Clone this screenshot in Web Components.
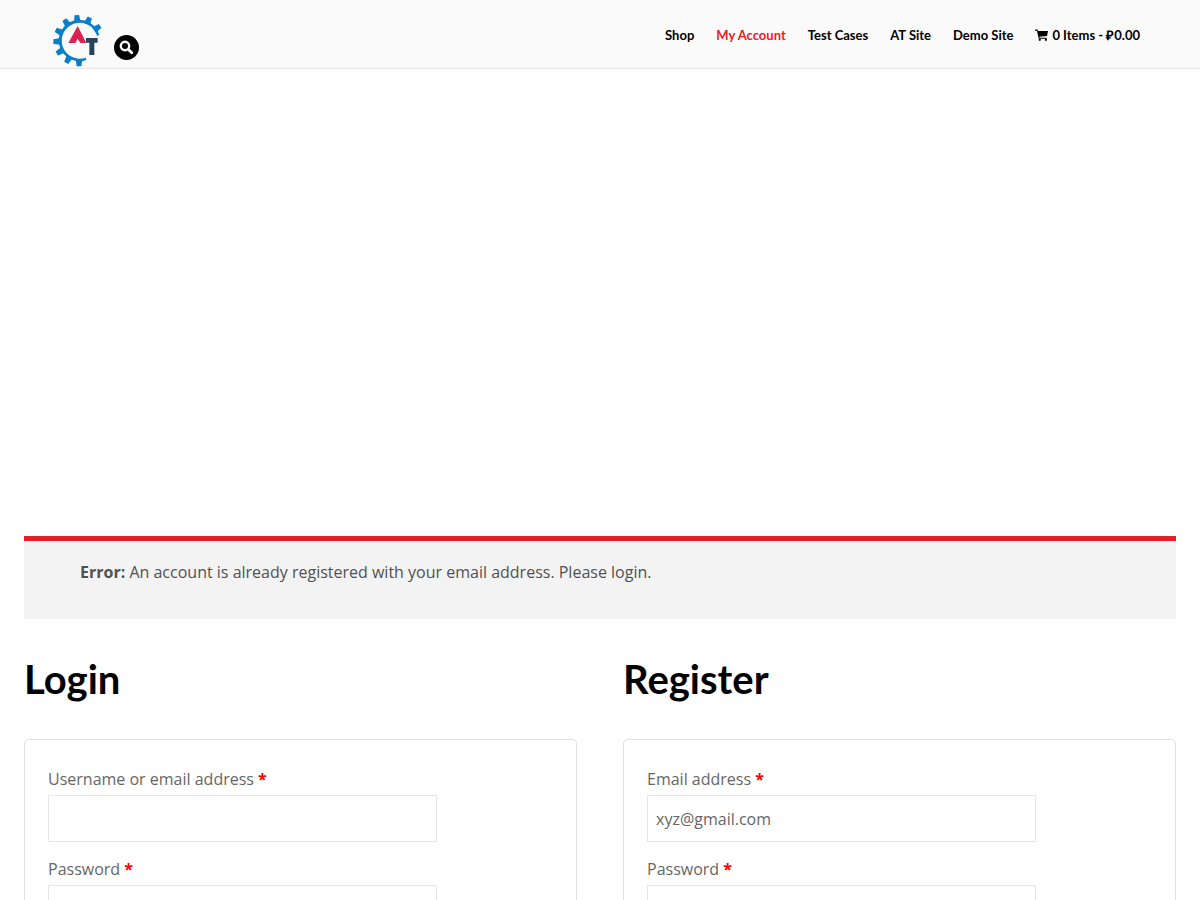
<!DOCTYPE html>
<html lang="en">
<head>
<meta charset="utf-8">
<meta name="viewport" content="width=device-width, initial-scale=1">
<title>My Account</title>
<style>
body { margin: 0; background: #fff; color: #666; font: 16px/24px "Open Sans", sans-serif; }
</style>
</head>
<body>
<account-page></account-page>
<script>
const define = (name, html, setup) => {
  const template = document.createElement('template');
  template.innerHTML = html;
  customElements.define(name, class extends HTMLElement {
    constructor() {
      super();
      this.attachShadow({ mode: 'open' }).append(template.content.cloneNode(true));
    }
    connectedCallback() { if (setup) setup(this, this.shadowRoot); }
  });
};

define('site-logo', `
<style>
:host { display: block; }
a, svg { display: block; }
</style>
<a href="#" aria-label="Home">
<svg width="52" height="54" viewBox="0 0 156 162">
  <g transform="translate(81 80)">
    <path d="M22 58A62 62 0 1 1 61 -17L54 -15A54 54 0 1 0 20 51Z" fill="#0a7fc8"/>
    <g id="teeth" fill="#0a7fc8"></g>
  </g>
  <path d="M77 36L103 87H85L77 74L70 87H49Z" fill="#dd2150"/>
  <path d="M102 72h35v14h-10v37h-15v-37h-10z" fill="#27445c"/>
</svg></a>`, (host, root) => {
  root.querySelector('#teeth').innerHTML = [90, 120, 150, 178, 205, 235, 265, 295, 325]
    .map(a => `<path d="M55 -10L77 -7V7L55 10Z" transform="rotate(${a})"/>`).join('');
});

define('search-button', `
<style>
:host { display: block; }
button { display: block; width: 25px; height: 25px; padding: 0; border: 0; border-radius: 50%; background: #000; }
svg { display: block; margin: auto; }
</style>
<button type="button" aria-label="Search"><svg width="15" height="15" viewBox="0 0 15 15" fill="none" stroke="#fff"><circle cx="6" cy="6" r="4.2" stroke-width="2.4"/><path d="M9.4 9.4l3.4 3.4" stroke-width="2.8" stroke-linecap="round"/></svg></button>`);

define('nav-link', `
<style>
:host { display: block; }
a { display: flex; align-items: center; gap: 4px; color: #000; text-decoration: none; white-space: nowrap; }
:host([current]) a { color: #ed1c24; }
</style>
<a href="#"><slot></slot></a>`);

define('cart-icon', `
<style>:host, svg { display: block; }</style>
<svg width="13" height="12" viewBox="0 0 13 12"><path d="M0 0.5h2.6l.5 1.4H13l-1 5.1-7.6.8.2 1h7.2v1H3.7L2 1.7H0z"/><circle cx="4.8" cy="10.8" r="1.1"/><circle cx="10.9" cy="10.8" r="1.1"/></svg>`);

define('site-header', `
<style>
:host { display: block; background: #fafafa; border-bottom: 1px solid #e5e5e5; }
header { display: flex; justify-content: space-between; padding: 14px 60px 0 52px; }
.brand { display: flex; align-items: flex-end; gap: 10px; }
search-button { margin-bottom: 8px; }
nav { display: flex; gap: 22px; padding-top: 9px; font: 700 13px/24px Lato, sans-serif; }
</style>
<header>
  <div class="brand"><site-logo></site-logo><search-button></search-button></div>
  <nav>
    <nav-link>Shop</nav-link>
    <nav-link current>My Account</nav-link>
    <nav-link>Test Cases</nav-link>
    <nav-link>AT Site</nav-link>
    <nav-link>Demo Site</nav-link>
    <nav-link><cart-icon></cart-icon><span>0 Items - ₽0.00</span></nav-link>
  </nav>
</header>`);

define('error-notice', `
<style>
:host { display: block; background: #f3f3f3; border-top: 5px solid #ed1c24; color: #515151; padding: 19px 56px 35px; }
</style>
<div role="alert"><slot></slot></div>`);

define('form-field', `
<style>
:host { display: block; }
label { display: block; margin-bottom: 4px; }
b { color: #f00; }
input { display: block; box-sizing: border-box; width: 77%; height: 47px; padding: 0 8px; border: 1px solid #e6e6e6; border-radius: 0; background: #fff; color: #666; font: inherit; }
</style>
<label for="field"><span></span> <b>*</b></label>
<input id="field">`, (host, root) => {
  root.querySelector('span').textContent = host.getAttribute('label');
  const input = root.querySelector('input');
  input.type = host.getAttribute('type') || 'text';
  input.value = host.getAttribute('value') || '';
});

define('form-panel', `
<style>
:host { display: block; }
h2 { margin: 0 0 35px; color: #000; font: 700 40px/50px Lato, sans-serif; }
form { display: grid; gap: 15px; padding: 27px 23px 24px; border: 1px solid #e0e0e0; border-radius: 5px; }
</style>
<section><h2></h2><form><slot></slot></form></section>`, (host, root) => {
  root.querySelector('h2').textContent = host.getAttribute('heading');
});

define('account-page', `
<style>
:host { display: block; }
main { padding: 0 24px 24px; }
.banner { height: 467px; }
.forms { display: grid; grid-template-columns: 1fr 1fr; gap: 46px; margin-top: 35px; }
</style>
<site-header></site-header>
<main>
  <div class="banner"></div>
  <error-notice><strong>Error:</strong> An account is already registered with your email address. Please login.</error-notice>
  <div class="forms">
    <form-panel heading="Login">
      <form-field label="Username or email address"></form-field>
      <form-field label="Password" type="password"></form-field>
    </form-panel>
    <form-panel heading="Register">
      <form-field label="Email address" type="email" value="xyz@gmail.com"></form-field>
      <form-field label="Password" type="password"></form-field>
    </form-panel>
  </div>
</main>`);
</script>
</body>
</html>
